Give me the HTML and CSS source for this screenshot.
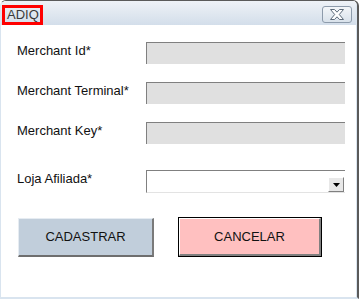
FILE: index.html
```html
<!DOCTYPE html>
<html>
<head>
<meta charset="utf-8">
<link rel="stylesheet" href="styles.css">
</head>
<body>
<div class="window">
  <div class="titlebar">
    <div class="title">ADIQ</div>
    <div class="close">
      <svg width="16" height="11" viewBox="0 0 16 11">
        <path d="M1.5 0.5 L5.5 0.5 L8 3.2 L10.5 0.5 L14.5 0.5 L10.3 5.5 L14.5 10.5 L10.5 10.5 L8 7.8 L5.5 10.5 L1.5 10.5 L5.7 5.5 Z" fill="#fff" stroke="#5d6b7a" stroke-width="1" stroke-linejoin="round"/>
      </svg>
    </div>
  </div>
  <div class="content">
    <div class="form">
      <label class="lbl">Merchant Id*</label>
      <div class="field"></div>
      <label class="lbl">Merchant Terminal*</label>
      <div class="field"></div>
      <label class="lbl">Merchant Key*</label>
      <div class="field"></div>
      <label class="lbl lbl-select">Loja Afiliada*</label>
      <div class="select">
        <div class="drop">
          <svg width="7" height="4" viewBox="0 0 7 4"><path d="M0 0 L7 0 L3.5 4 Z" fill="#000"/></svg>
        </div>
      </div>
    </div>
    <div class="buttons">
      <div class="btn btn-save">CADASTRAR</div>
      <div class="btn btn-cancel"><div class="btn-inner">CANCELAR</div></div>
    </div>
  </div>
</div>
</body>
</html>
```
FILE: styles.css
```css
html, body {
  margin: 0;
  padding: 0;
  background: #fff;
}
.window {
  width: 359px;
  height: 299px;
  box-sizing: border-box;
  border-top: 1px solid #5a5a5a;
  border-right: 2px solid #5a5a5a;
  border-left: 1px solid #d9e4ef;
  border-bottom: 2px solid #d9e4ef;
  border-radius: 6px 6px 0 0;
  display: flex;
  flex-direction: column;
  overflow: hidden;
  font-family: "Liberation Sans", Arial, sans-serif;
  font-size: 13px;
  color: #111;
}
.titlebar {
  height: 24px;
  flex: none;
  background: linear-gradient(#eef2f7, #d3deea);
  display: flex;
  align-items: flex-end;
  justify-content: space-between;
  border-right: 1px solid #d9e4ef;
}
.title {
  margin-left: 1px;
  width: 41px;
  height: 20px;
  box-sizing: border-box;
  border: 3px solid #f00;
  padding-left: 2px;
  line-height: 14px;
  color: #3a3a3a;
  font-size: 13px;
}
.close {
  align-self: flex-start;
  margin-top: 5px;
  margin-right: 4px;
  width: 30px;
  height: 17px;
  box-sizing: border-box;
  border: 1px solid #8d9bab;
  border-radius: 3px;
  background: linear-gradient(#f3f6f9, #d9e2eb);
  display: flex;
  align-items: center;
  justify-content: center;
}
.content {
  flex: 1;
  background: #fff;
  padding: 17px 0 0 16px;
  border-right: 1px solid #d9e4ef;
}
.form {
  display: grid;
  grid-template-columns: 129px 199px;
  grid-template-rows: 22px 22px 22px 23px;
  row-gap: 18px;
}
.lbl {
  line-height: 18px;
  align-self: start;
  white-space: nowrap;
}
.lbl-select, .select {
  margin-top: 8px;
}
.field {
  height: 22px;
  box-sizing: border-box;
  background: #e0e0e0;
  border-top: 1px solid #808080;
  border-left: 1px solid #808080;
}
.select {
  height: 23px;
  box-sizing: border-box;
  background: #fff;
  border-top: 1px solid #808080;
  border-left: 1px solid #808080;
  border-bottom: 1px solid #e3e3e3;
  display: flex;
  justify-content: flex-end;
  align-items: flex-start;
  padding: 6px 1px 0 0;
}
.drop {
  width: 16px;
  height: 15px;
  box-sizing: border-box;
  background: #e8e8e8;
  border-top: 1px solid #fff;
  border-left: 1px solid #fff;
  border-right: 1px solid #808080;
  border-bottom: 1px solid #808080;
  display: flex;
  align-items: center;
  justify-content: center;
}
.buttons {
  display: flex;
  align-items: flex-start;
  gap: 24px;
  margin-top: 32px;
  padding-left: 1px;
}
.btn {
  box-sizing: border-box;
  display: flex;
  align-items: center;
  justify-content: center;
  font-size: 13px;
}
.btn-save {
  margin-top: 1px;
  width: 136px;
  height: 39px;
  background: #c1cedb;
  border-top: 1px solid #e6ecf2;
  border-left: 1px solid #e6ecf2;
  border-right: 2px solid #7a7a7a;
  border-bottom: 2px solid #6e6e6e;
  padding-bottom: 1px;
}
.btn-cancel {
  width: 144px;
  height: 40px;
  border: 1px solid #000;
}
.btn-inner {
  width: 100%;
  height: 100%;
  box-sizing: border-box;
  background: #ffc0c0;
  border-top: 1px solid #fff;
  border-left: 1px solid #fff;
  border-right: 2px solid #808080;
  border-bottom: 2px solid #808080;
  display: flex;
  align-items: center;
  justify-content: center;
}
```
